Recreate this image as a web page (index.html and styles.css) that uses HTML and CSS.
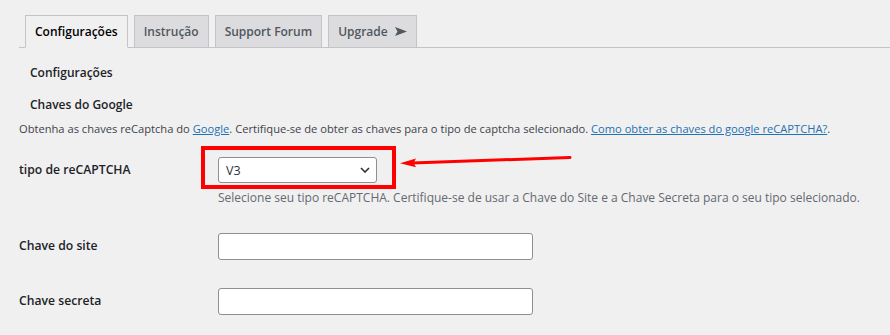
FILE: index.html
```html
<!DOCTYPE html>
<html lang="pt-BR">
<head>
  <meta charset="UTF-8">
  <title>Configurações reCAPTCHA</title>
  <link rel="stylesheet" href="styles.css">
</head>
<body>
  <div class="wrap">
    <nav class="nav-tabs">
      <a class="tab active" href="#">Configurações</a>
      <a class="tab" href="#">Instrução</a>
      <a class="tab" href="#">Support Forum</a>
      <a class="tab" href="#">Upgrade
        <svg class="tab-arrow" width="12" height="9" viewBox="0 0 12 9"><path d="M0 0 L12 4.5 L0 9 L2.5 4.5 Z" fill="#50575e"/></svg>
      </a>
    </nav>

    <h2 class="subhead first">Configurações</h2>
    <h3 class="subhead">Chaves do Google</h3>
    <p class="desc-top">
      Obtenha as chaves reCaptcha do <a href="#">Google</a>. Certifique-se de obter as chaves para o tipo de captcha selecionado. <a href="#">Como obter as chaves do google reCAPTCHA?</a>.
    </p>

    <div class="form-row row-type">
      <label class="row-label">tipo de reCAPTCHA</label>
      <div class="field">
        <div class="select-wrap">
          <select class="select">
            <option>V3</option>
            <option>V2</option>
          </select>
          <svg class="chevron" width="10" height="6" viewBox="0 0 10 6"><path d="M1 1 L5 5 L9 1" fill="none" stroke="#2c3338" stroke-width="1.6"/></svg>
          <!-- annotation over the screenshot -->
          <div class="mark-box"></div>
          <svg class="mark-arrow" width="176" height="16" viewBox="0 0 176 16">
            <line x1="14" y1="10" x2="172" y2="4.5" stroke="#f00" stroke-width="3" stroke-linecap="round"/>
            <path d="M2 10.3 L18 5.6 L15.5 10 L18 14.2 Z" fill="#f00"/>
          </svg>
        </div>
        <p class="hint">Selecione seu tipo reCAPTCHA. Certifique-se de usar a Chave do Site e a Chave Secreta para o seu tipo selecionado.</p>
      </div>
    </div>

    <div class="form-row row-key">
      <label class="row-label">Chave do site</label>
      <div class="field"><input class="text-input" type="text"></div>
    </div>

    <div class="form-row row-secret">
      <label class="row-label">Chave secreta</label>
      <div class="field"><input class="text-input" type="text"></div>
    </div>
  </div>
</body>
</html>
```

FILE: styles.css
```css
body {
  margin: 0;
  background: #f0f0f1;
  font-family: 'Open Sans', sans-serif;
  color: #1d2327;
}

.wrap {
  padding: 15px 0 20px 19px;
}

.nav-tabs {
  display: flex;
  gap: 6px;
  padding-left: 6px;
  border-bottom: 1px solid #c3c4c7;
}

.tab {
  box-sizing: border-box;
  height: 33px;
  margin-bottom: -1px;
  display: flex;
  align-items: center;
  gap: 7px;
  padding: 0 9px;
  border: 1px solid #c3c4c7;
  background: #dcdcde;
  color: #50575e;
  font-size: 12px;
  font-weight: 600;
  text-decoration: none;
}

.tab.active {
  background: #f0f0f1;
  border-bottom-color: #f0f0f1;
  color: #000;
}

.subhead {
  margin: 14px 0 0;
  padding-left: 11px;
  font-size: 12px;
  font-weight: 600;
  line-height: 18px;
}

.subhead.first {
  margin-top: 16px;
}

.desc-top {
  margin: 7px 0 0;
  font-size: 11.15px;
  line-height: 16px;
  color: #3c434a;
  white-space: nowrap;
}

.desc-top a {
  color: #2271b1;
}

.form-row {
  display: grid;
  grid-template-columns: 199px 320px;
}

.row-label {
  font-size: 12.2px;
  font-weight: 600;
  line-height: 26px;
}

.row-type {
  margin-top: 20px;
}

.row-key {
  margin-top: 27px;
}

.row-secret {
  margin-top: 28px;
}

.select-wrap {
  position: relative;
  width: 159px;
}

.select {
  appearance: none;
  box-sizing: border-box;
  width: 159px;
  height: 26px;
  padding: 0 24px 0 7px;
  border: 1px solid #8c8f94;
  border-radius: 3px;
  background: #fff;
  font-family: inherit;
  font-size: 12.5px;
  color: #2c3338;
}

.chevron {
  position: absolute;
  right: 7px;
  top: 10px;
  pointer-events: none;
}

.mark-box {
  position: absolute;
  left: -17px;
  top: -11px;
  width: 195px;
  height: 43px;
  box-sizing: border-box;
  border: 4px solid #f00;
}

.mark-arrow {
  position: absolute;
  left: 180px;
  top: -4px;
}

.hint {
  margin: 7px 0 0;
  font-size: 12px;
  line-height: 16px;
  color: #646970;
  white-space: nowrap;
}

.text-input {
  box-sizing: border-box;
  width: 315px;
  height: 27px;
  border: 1px solid #8c8f94;
  border-radius: 3px;
  background: #fff;
}
```
